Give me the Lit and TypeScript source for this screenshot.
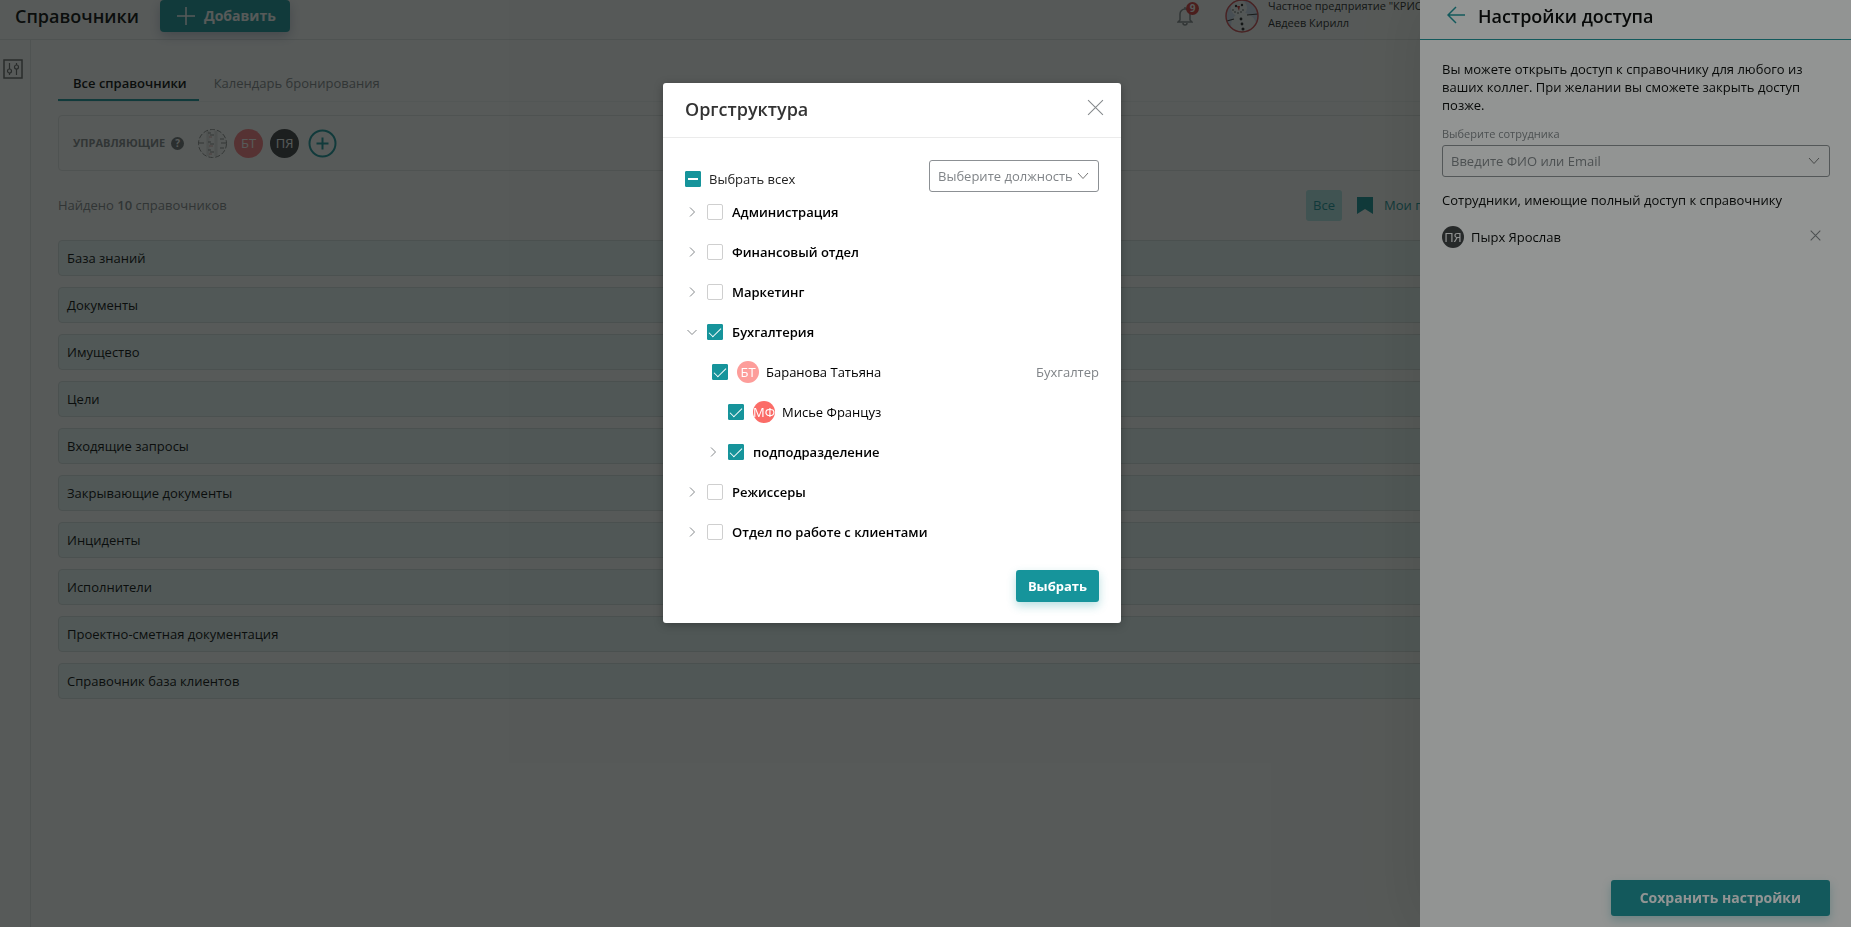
import { LitElement, html, css, svg, nothing } from "lit";
import { customElement, state } from "lit/decorators.js";

const DIRECTORIES = [
  "База знаний",
  "Документы",
  "Имущество",
  "Цели",
  "Входящие запросы",
  "Закрывающие документы",
  "Инциденты",
  "Исполнители",
  "Проектно-сметная документация",
  "Справочник база клиентов",
];

interface Node {
  id: string;
  label: string;
  kind: "unit" | "person";
  level: number;
  checked?: boolean;
  open?: boolean;
  initials?: string;
  tone?: string;
  role?: string;
}

const TREE: Node[] = [
  { id: "adm", label: "Администрация", kind: "unit", level: 0 },
  { id: "fin", label: "Финансовый отдел", kind: "unit", level: 0 },
  { id: "mkt", label: "Маркетинг", kind: "unit", level: 0 },
  { id: "acc", label: "Бухгалтерия", kind: "unit", level: 0, checked: true, open: true },
  { id: "bt", label: "Баранова Татьяна", kind: "person", level: 1, checked: true, initials: "БТ", tone: "rose", role: "Бухгалтер" },
  { id: "mf", label: "Мисье Француз", kind: "person", level: 2, checked: true, initials: "МФ", tone: "coral" },
  { id: "sub", label: "подподразделение", kind: "unit", level: 1, checked: true },
  { id: "dir", label: "Режиссеры", kind: "unit", level: 0 },
  { id: "cli", label: "Отдел по работе с клиентами", kind: "unit", level: 0 },
];

const chevron = html`<svg class="chevron" viewBox="0 0 12 8" aria-hidden="true"><path d="M1 1l5 5.5L11 1" /></svg>`;
const cross = svg`<path d="M1 1l14 14M15 1L1 15" />`;

@customElement("app-root")
export class AppRoot extends LitElement {
  @state() private tree: Node[] = TREE;

  static styles = css`
    :host {
      display: block;
      font-family: "Open Sans", "Noto Sans", sans-serif;
      font-size: 13px;
      line-height: 18px;
      color: #000;
      --teal: #16949b;
      --line: #e3e6e6;
      --muted: #808488;
    }
    * { box-sizing: border-box; }
    button, input, select { font: inherit; color: inherit; margin: 0; }
    button { border: 0; padding: 0; background: none; cursor: pointer; }
    h1, h2, p, ul { margin: 0; padding: 0; }
    ul { list-style: none; }
    a { color: inherit; text-decoration: none; }
    svg { display: block; fill: none; stroke: currentColor; }

    .page { height: 100vh; overflow: hidden; display: flex; flex-direction: column; background: #fff; }
    .topbar { display: flex; align-items: flex-start; height: 40px; padding-left: 15px; border-bottom: 1px solid var(--line); }
    .title { font-size: 18px; line-height: 32px; font-weight: 600; }
    .add {
      display: flex; align-items: center; gap: 9px; height: 32px; margin-left: 21px; padding: 0 14px 0 17px;
      border-radius: 4px; background: var(--teal); color: #fff; font-size: 14px; font-weight: 700;
      box-shadow: 0 4px 12px rgba(40, 60, 110, 0.3);
    }
    .add svg { width: 18px; height: 18px; stroke-width: 1.5; }
    .account { display: flex; margin-left: auto; margin-right: 431px; }
    .bell { position: relative; width: 24px; height: 24px; margin: 4px 24px 0 0; color: #83878a; }
    .bell svg { width: 16px; height: 20px; stroke-width: 1.5; }
    .count {
      position: absolute; left: 9px; top: -2px; width: 13px; height: 13px; border-radius: 50%;
      background: #d93a3a; color: #fff; font-size: 10px; line-height: 13px; font-weight: 700; text-align: center;
    }
    .photo { width: 34px; height: 34px; margin-right: 9px; margin-top: -1px; stroke: none; }
    .who { width: 152px; overflow: hidden; white-space: nowrap; font-size: 11px; line-height: 17px; margin-top: -3px; color: #1c1c1c; }

    .body { flex: 1; display: flex; min-height: 0; }
    .rail { width: 31px; padding: 19px 0 0 3px; border-right: 1px solid var(--line); color: #666; }
    .rail svg { width: 20px; height: 20px; }
    .main { flex: 1; min-width: 0; padding: 22px 0 0 27px; }
    .tabs { display: flex; border-bottom: 1px solid #f1f3f3; }
    .tab { padding: 12px 12px 8px 15px; color: var(--muted); height: 39px; }
    .tab.on { color: #000; font-weight: 600; border-bottom: 2px solid var(--teal); }
    .managers {
      display: flex; align-items: center; height: 56px; margin-top: 13px; padding-left: 14px;
      border: 1px solid var(--line); border-radius: 4px;
    }
    .caption { font-size: 11px; font-weight: 700; color: var(--muted); }
    .help { width: 13px; height: 13px; margin: 0 14px 0 6px; border-radius: 50%; background: #6b6f72; color: #fff; font-size: 10px; line-height: 13px; font-weight: 700; text-align: center; }
    .circles { display: flex; gap: 7px; align-items: center; }
    .circles > svg { width: 29px; height: 29px; }
    .avatar { display: flex; align-items: center; justify-content: center; flex: none; width: 22px; height: 22px; border-radius: 50%; color: #fff; font-size: 13px; overflow: hidden; }
    .avatar.big { width: 29px; height: 29px; }
    .rose { background: #fd9d9a; }
    .salmon { background: #fb7b80; }
    .coral { background: #fb6c67; }
    .dark { background: #3a3b3e; }
    .plus { margin-left: 2px; color: var(--teal); }
    .plus svg { width: 29px; height: 29px; stroke-width: 2; }

    .found { display: flex; align-items: center; justify-content: space-between; height: 32px; margin-top: 18px; color: var(--muted); }
    .found b { font-weight: 600; }
    .filters { display: flex; align-items: center; width: 114px; margin-right: 431px; overflow: hidden; white-space: nowrap; color: var(--teal); }
    .all { flex: none; width: 36px; height: 31px; border-radius: 3px; background: #b4eaea; color: var(--teal); }
    .mine { flex: none; display: flex; align-items: center; gap: 11px; margin-left: 15px; }
    .mine svg { width: 16px; height: 17px; fill: var(--teal); stroke: none; }
    .list { display: flex; flex-direction: column; gap: 11px; margin-top: 19px; }
    .entry { display: block; height: 36px; padding: 0 8px; line-height: 34px; border: 1px solid #d8e0e0; border-radius: 4px; background: #ebf9f9; color: #000; }

    .veil { position: fixed; inset: 0; background: rgba(15, 20, 18, 0.455); }
    .panel {
      position: fixed; top: 0; right: 0; bottom: 0; width: 431px; display: flex; flex-direction: column;
      background: #fff; box-shadow: 0 0 60px rgba(0, 0, 0, 0.12);
    }
    .phead { display: flex; align-items: flex-start; gap: 13px; height: 40px; padding-left: 27px; border-bottom: 1px solid var(--teal); }
    .back { color: var(--teal); margin-top: 6px; }
    .back svg { width: 18px; height: 18px; stroke-width: 1.5; }
    .pbody { flex: 1; padding: 20px 21px 0 22px; }
    .hint { padding: 0 24px 0 0; }
    .pbody .lbl { display: block; margin-top: 12px; font-size: 11px; line-height: 16px; color: var(--muted); }
    .combo { display: grid; align-items: center; }
    .combo > * { grid-area: 1 / 1; }
    .combo .chevron { justify-self: end; pointer-events: none; width: 12px; height: 8px; margin-right: 10px; color: #777; }
    .field { width: 100%; height: 32px; padding: 0 8px; border: 1px solid #8c9094; border-radius: 3px; background: #fff; outline: 0; appearance: none; color: var(--muted); }
    .field::placeholder { color: var(--muted); opacity: 1; }
    .combo.wide { margin-top: 3px; }
    .sub { margin-top: 14px; }
    .member { display: flex; align-items: center; gap: 7px; margin-top: 17px; height: 22px; }
    .member .remove { margin: 0 9px 4px auto; color: #808488; }
    .remove svg { width: 11px; height: 11px; }
    .pfoot { display: flex; justify-content: flex-end; padding: 0 21px 11px; }
    .primary { background: var(--teal); color: #fff; font-weight: 700; border-radius: 3px; box-shadow: 0 4px 10px rgba(22, 148, 155, 0.3); }
    .save { height: 36px; padding: 0 29px; font-size: 14px; }

    .stage { position: fixed; inset: 0; padding: 83px 67px 0 0; display: flex; justify-content: center; align-items: flex-start; }
    .modal { width: 458px; background: #fff; border-radius: 3px; box-shadow: 0 2px 10px rgba(0, 0, 0, 0.3); }
    .mhead { display: flex; justify-content: space-between; align-items: flex-start; height: 55px; padding: 10px 17px 0 22px; border-bottom: 1px solid #ebebeb; }
    .mhead .title { color: #333; }
    .close { margin-top: 6px; color: #85898c; }
    .close svg { width: 17px; height: 17px; }
    .mbody { padding: 22px 22px 21px; }
    .mtop { display: flex; justify-content: space-between; align-items: center; height: 32px; }
    .selectall { display: flex; align-items: center; gap: 8px; padding-top: 5px; color: #222; }
    .combo.short { width: 170px; }
    .check {
      appearance: none; flex: none; display: grid; place-items: center; width: 16px; height: 16px;
      border: 1px solid #cfcfcf; border-radius: 2px; background: #fff; cursor: pointer;
    }
    .check:checked, .check:indeterminate { border-color: var(--teal); background: var(--teal); border-radius: 1px; }
    .check:checked::before { content: ""; width: 11px; height: 5px; margin-top: -3px; border: solid #fff; border-width: 0 0 1px 1px; transform: rotate(-45deg); }
    .check:indeterminate::before { content: ""; width: 10px; height: 2px; background: #fff; }
    .node { display: flex; align-items: center; height: 40px; }
    .caret { display: grid; place-items: center; width: 14px; height: 16px; margin-right: 8px; color: #85898c; }
    .caret svg { width: 10px; height: 10px; }
    .caret.open svg { transform: rotate(90deg); }
    .node label { display: flex; align-items: center; gap: 9px; }
    .unit label { font-weight: 600; }
    .level1.unit { padding-left: 21px; }
    .level1.person { padding-left: 27px; }
    .level2.person { padding-left: 43px; }
    .person .text { margin-left: -2px; }
    .role { margin-left: auto; color: var(--muted); }
    .mfoot { display: flex; justify-content: flex-end; margin-top: 18px; }
    .choose { height: 32px; padding: 0 12px; }
  `;

  private toggle(id: string) {
    this.tree = this.tree.map((n) => (n.id === id ? { ...n, checked: !n.checked } : n));
  }

  private renderNode(n: Node) {
    return html`<li class="node ${n.kind} level${n.level}">
      ${n.kind === "unit"
        ? html`<button class="caret ${n.open ? "open" : ""}" aria-label="Развернуть">
            <svg viewBox="0 0 10 10"><path d="M3 0.5L7.5 5L3 9.5" /></svg>
          </button>`
        : nothing}
      <label>
        <input class="check" type="checkbox" .checked=${!!n.checked} @change=${() => this.toggle(n.id)} />
        ${n.initials ? html`<span class="avatar ${n.tone}">${n.initials}</span>` : nothing}
        <span class="text">${n.label}</span>
      </label>
      ${n.role ? html`<span class="role">${n.role}</span>` : nothing}
    </li>`;
  }

  render() {
    return html`
      <div class="page">
        <header class="topbar">
          <h1 class="title">Справочники</h1>
          <button class="add"><svg viewBox="0 0 18 18"><path d="M9 0v18M0 9h18" /></svg>Добавить</button>
          <div class="account">
            <button class="bell" aria-label="Уведомления">
              <svg viewBox="0 0 16 20"><path d="M3 14V8a5 5 0 0 1 10 0v6l2 2H1zM8 3V1M6 17a2 2 0 0 0 4 0" /></svg>
              <span class="count">9</span>
            </button>
            <svg class="photo" viewBox="0 0 34 34" aria-hidden="true">
              <circle cx="17" cy="17" r="16" fill="#cfdcf0" />
              <circle cx="14" cy="9" r="8" fill="#f6f7f9" />
              <path d="M17 33A16 16 0 0 1 6 28q0-9 5-12l10-2q10 4 10 12a16 16 0 0 1-14 7z" fill="#f6f7f9" />
              <g fill="#222"><circle cx="11" cy="7" r="1.2" /><circle cx="17" cy="6" r="1.2" /><circle cx="8" cy="11" r=".7" /><circle cx="10" cy="13" r=".7" /><circle cx="13" cy="14" r=".7" /><circle cx="16" cy="13" r=".7" /><circle cx="18" cy="11" r=".7" /><circle cx="16" cy="20" r="1.4" /><circle cx="17" cy="25" r="1.4" /><circle cx="18" cy="30" r="1.5" /></g>
              <path d="M12 7h3l-1 5z" fill="#c33" />
              <path d="M22 16l11-1M2 22l7-2" stroke="#333" stroke-width="1.2" />
              <circle cx="17" cy="17" r="16" fill="none" stroke="#d0494f" stroke-width="1.5" />
            </svg>
            <div class="who">Частное предприятие "КРИОН"<br />Авдеев Кирилл</div>
          </div>
        </header>
        <div class="body">
          <nav class="rail">
            <button aria-label="Фильтры">
              <svg viewBox="0 0 20 20" stroke-width="1.2"><rect x="1" y="1" width="18" height="18" stroke-width="1.5" /><path d="M6.500 4v6M6.500 14v2M13.500 4v2M13.500 10v6" /><circle cx="6.500" cy="12" r="2" /><circle cx="13.500" cy="8" r="2" /></svg>
            </button>
          </nav>
          <main class="main">
            <nav class="tabs">
              <a class="tab on" href="#all">Все справочники</a>
              <a class="tab" href="#calendar">Календарь бронирования</a>
            </nav>
            <section class="managers">
              <span class="caption">УПРАВЛЯЮЩИЕ</span><span class="help">?</span>
              <div class="circles">
                <svg viewBox="0 0 29 29" aria-hidden="true">
                  <circle cx="14.5" cy="14.5" r="14" fill="#f7f7f7" stroke="#888" stroke-dasharray="5 2" />
                  <path d="M10 2v25M18 2v25" stroke="#e2e2e2" stroke-width="3" />
                  <path d="M10 4h3M12 6h4M0 14h6M10 13h3M12 15h4M22 10h4M22 19h4M10 21h3M12 23h4M23 14h5" stroke="#888" />
                  <path d="M11 8h3M11 17h4M11 25h3" stroke="#d9a0a0" />
                </svg>
                <span class="avatar big salmon">БТ</span>
                <span class="avatar big dark">ПЯ</span>
                <button class="plus" aria-label="Добавить управляющего"><svg viewBox="0 0 29 29"><circle cx="14.5" cy="14.5" r="13" /><path d="M14.5 8.5v12M8.5 14.5h12" /></svg></button>
              </div>
            </section>
            <div class="found">
              <span>Найдено <b>10</b> справочников</span>
              <div class="filters">
                <button class="all">Все</button>
                <button class="mine"><svg viewBox="0 0 16 17"><path d="M0 0h16v17l-8-5-8 5z" /></svg>Мои п</button>
              </div>
            </div>
            <div class="list">${DIRECTORIES.map((d) => html`<a class="entry" href="#dir">${d}</a>`)}</div>
          </main>
        </div>
      </div>

      <div class="veil"></div>
      <aside class="panel">
        <header class="phead">
          <button class="back" aria-label="Назад"><svg viewBox="0 0 18 18"><path d="M18 9H1M9 1L1 9l8 8" /></svg></button>
          <h2 class="title">Настройки доступа</h2>
        </header>
        <div class="pbody">
          <p class="hint">Вы можете открыть доступ к справочнику для любого из ваших коллег. При желании вы сможете закрыть доступ позже.</p>
          <label class="lbl" for="employee">Выберите сотрудника</label>
          <div class="combo wide"><input id="employee" class="field" placeholder="Введите ФИО или Email" />${chevron}</div>
          <p class="sub">Сотрудники, имеющие полный доступ к справочнику</p>
          <div class="member">
            <span class="avatar dark">ПЯ</span>Пырх Ярослав
            <button class="remove" aria-label="Удалить"><svg viewBox="0 0 16 16" stroke-width="1.5">${cross}</svg></button>
          </div>
        </div>
        <footer class="pfoot"><button class="primary save">Сохранить настройки</button></footer>
      </aside>

      <div class="veil"></div>
      <div class="stage">
        <section class="modal" role="dialog" aria-labelledby="org">
          <header class="mhead">
            <h2 class="title" id="org">Оргструктура</h2>
            <button class="close" aria-label="Закрыть"><svg viewBox="0 0 16 16">${cross}</svg></button>
          </header>
          <div class="mbody">
            <div class="mtop">
              <label class="selectall"><input class="check" type="checkbox" .indeterminate=${true} />Выбрать всех</label>
              <div class="combo short">
                <select class="field" aria-label="Должность"><option>Выберите должность</option><option>Бухгалтер</option></select>${chevron}
              </div>
            </div>
            <ul>${this.tree.map((n) => this.renderNode(n))}</ul>
            <footer class="mfoot"><button class="primary choose">Выбрать</button></footer>
          </div>
        </section>
      </div>
    `;
  }
}
